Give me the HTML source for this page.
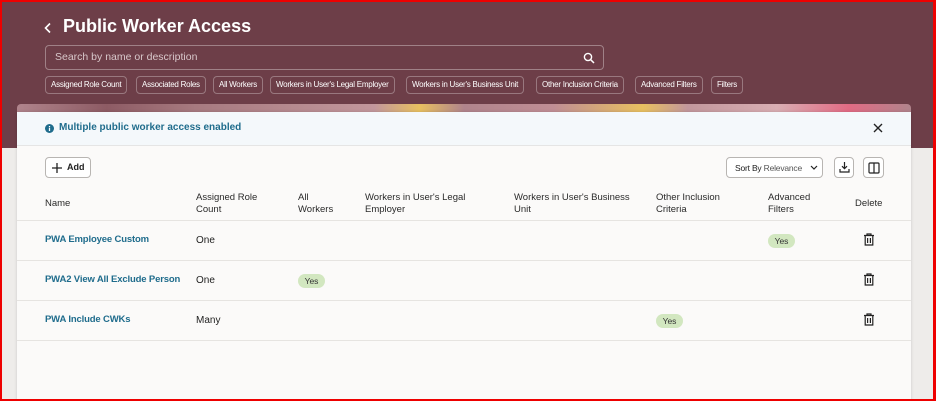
<!DOCTYPE html>
<html><head><meta charset="utf-8"><style>
*{box-sizing:border-box;margin:0;padding:0}
body{width:936px;height:401px;overflow:hidden;font-family:"Liberation Sans",sans-serif;background:#eeecea;position:relative}
.frame{position:absolute;inset:0;border:2px solid #e00;border-right-width:3px;z-index:10;pointer-events:none}
.top{position:absolute;left:0;top:0;width:936px;height:148px;background:#6d3e48}
.a{position:absolute}
.chip{position:absolute;top:76px;height:18px;border:1px solid rgba(255,255,255,.3);border-radius:4px;color:#fff;font-size:8px;line-height:16px;padding:0 5px;white-space:nowrap;letter-spacing:-.25px}
.strip{position:absolute;left:17px;top:104px;width:894px;height:10px;border-radius:4px 4px 0 0;background:linear-gradient(90deg,#b0848c 0,#8d5b64 10%,#a77a80 20%,#c2979c 40%,#e8c060 45%,#b0848c 50%,#c08e95 60%,#e8c060 70%,#c2979c 75%,#d9aeb3 85%,#e26b84 93%,#b0848c 100%)}
.card{position:absolute;left:17px;top:112px;width:894px;height:289px;background:#fbfaf9;box-shadow:0 0 3px rgba(0,0,0,.15)}
.banner{height:34px;background:#f4f8fb;border-bottom:1px solid #e5e5e5;position:relative}
.btn{position:absolute;border:1px solid #b8b5b2;border-radius:4px;background:#fff;height:21px}
.th{position:absolute;font-size:9.5px;color:#2a2a2a;line-height:12px}
.line{position:absolute;left:0;width:894px;height:1px;background:#e6e4e1}
.name{position:absolute;left:28px;font-size:9.5px;font-weight:bold;color:#1f6c8c;letter-spacing:-.15px}
.val{position:absolute;font-size:10px;color:#222}
.yes{position:absolute;width:27px;height:14px;border-radius:7px;background:#d2e7c0;font-size:8.5px;line-height:14px;text-align:center;color:#333}
</style></head><body>
<div class="top"></div>
<div class="frame"></div>
<svg class="a" style="left:43px;top:22px" width="10" height="12" viewBox="0 0 10 12"><path d="M7 1.5L2.5 6 7 10.5" stroke="#fff" stroke-width="1.6" fill="none"/></svg>
<div class="a" style="left:63px;top:16px;font-size:18px;font-weight:bold;color:#fff">Public Worker Access</div>
<div class="a" style="left:45px;top:45px;width:559px;height:25px;border:1px solid rgba(255,255,255,.35);border-radius:4px"></div>
<div class="a" style="left:55px;top:51px;font-size:10.5px;color:#d8c8cb">Search by name or description</div>
<svg class="a" style="left:583px;top:52px" width="12" height="12" viewBox="0 0 12 12"><circle cx="5" cy="5" r="3.6" stroke="#fff" stroke-width="1.4" fill="none"/><path d="M7.7 7.7L11 11" stroke="#fff" stroke-width="1.5"/></svg>
<div class="chip" style="left:45px">Assigned Role Count</div>
<div class="chip" style="left:136px">Associated Roles</div>
<div class="chip" style="left:213px">All Workers</div>
<div class="chip" style="left:270px">Workers in User's Legal Employer</div>
<div class="chip" style="left:406px">Workers in User's Business Unit</div>
<div class="chip" style="left:536px">Other Inclusion Criteria</div>
<div class="chip" style="left:635px">Advanced Filters</div>
<div class="chip" style="left:711px">Filters</div>
<div class="strip"></div>
<div class="card">
 <div class="banner">
  <svg class="a" style="left:28px;top:12px" width="9" height="9" viewBox="0 0 10 10"><circle cx="5" cy="5" r="5" fill="#1f6c8c"/><rect x="4.3" y="4.2" width="1.4" height="3.6" fill="#fff"/><rect x="4.3" y="2.2" width="1.4" height="1.3" fill="#fff"/></svg>
  <div class="a" style="left:42px;top:10px;font-size:10px;font-weight:bold;color:#1f6c8c">Multiple public worker access enabled</div>
  <svg class="a" style="left:856px;top:11px" width="10" height="10" viewBox="0 0 10 10"><path d="M1 1L9 9M9 1L1 9" stroke="#222" stroke-width="1.4"/></svg>
 </div>
 <div class="btn" style="left:28px;top:45px;width:46px"><svg class="a" style="left:6px;top:5px" width="10" height="10"><path d="M5 0V10M0 5H10" stroke="#222" stroke-width="1.3"/></svg><span class="a" style="left:21px;top:4px;font-size:9px;font-weight:bold;color:#222">Add</span></div>
 <div class="btn" style="left:709px;top:45px;width:97px"><span class="a" style="left:8px;top:5px;font-size:8.5px;color:#222;white-space:nowrap;letter-spacing:-.2px">Sort By <span style="color:#555">Relevance</span></span><svg class="a" style="left:83px;top:7px" width="8" height="6"><path d="M1 1L4 4 7 1" stroke="#222" stroke-width="1.2" fill="none"/></svg></div>
 <div class="btn" style="left:817px;top:45px;width:20px"><svg class="a" style="left:4px;top:4px" width="11" height="11" viewBox="0 0 11 11"><path d="M5.5 0V6.5M3 4.2L5.5 6.7 8 4.2M1 7V10H10V7" stroke="#222" stroke-width="1.2" fill="none"/></svg></div>
 <div class="btn" style="left:846px;top:45px;width:21px"><svg class="a" style="left:4px;top:4px" width="12" height="12" viewBox="0 0 12 12"><rect x="1" y="1" width="10" height="10" rx="1" stroke="#222" stroke-width="1.2" fill="none"/><path d="M6 1V11" stroke="#222" stroke-width="1.2"/></svg></div>
 <div class="th" style="left:28px;top:86px">Name</div>
 <div class="th" style="left:179px;top:80px">Assigned Role<br>Count</div>
 <div class="th" style="left:281px;top:80px">All<br>Workers</div>
 <div class="th" style="left:348px;top:80px">Workers in User's Legal<br>Employer</div>
 <div class="th" style="left:497px;top:80px">Workers in User's Business<br>Unit</div>
 <div class="th" style="left:639px;top:80px">Other Inclusion<br>Criteria</div>
 <div class="th" style="left:751px;top:80px">Advanced<br>Filters</div>
 <div class="th" style="left:838px;top:86px">Delete</div>
 <div class="line" style="top:108px"></div>
 <div class="line" style="top:148px"></div>
 <div class="line" style="top:188px"></div>
 <div class="line" style="top:228px"></div>
 <div class="name" style="top:122px">PWA Employee Custom</div>
 <div class="val" style="left:179px;top:123px">One</div>
 <div class="yes" style="left:751px;top:122px">Yes</div>
 <div class="name" style="top:162px">PWA2 View All Exclude Person</div>
 <div class="val" style="left:179px;top:163px">One</div>
 <div class="yes" style="left:281px;top:162px">Yes</div>
 <div class="name" style="top:202px">PWA Include CWKs</div>
 <div class="val" style="left:179px;top:203px">Many</div>
 <div class="yes" style="left:639px;top:202px">Yes</div>
 <svg class="a" style="left:846px;top:121px" width="12" height="13" viewBox="0 0 12 13"><path d="M1 2.5H11M4 2.5V1H8V2.5M2.2 2.5V12H9.8V2.5M4.6 5V10M7.4 5V10" stroke="#222" stroke-width="1.2" fill="none"/></svg>
 <svg class="a" style="left:846px;top:161px" width="12" height="13" viewBox="0 0 12 13"><path d="M1 2.5H11M4 2.5V1H8V2.5M2.2 2.5V12H9.8V2.5M4.6 5V10M7.4 5V10" stroke="#222" stroke-width="1.2" fill="none"/></svg>
 <svg class="a" style="left:846px;top:201px" width="12" height="13" viewBox="0 0 12 13"><path d="M1 2.5H11M4 2.5V1H8V2.5M2.2 2.5V12H9.8V2.5M4.6 5V10M7.4 5V10" stroke="#222" stroke-width="1.2" fill="none"/></svg>
</div>
</body></html>
